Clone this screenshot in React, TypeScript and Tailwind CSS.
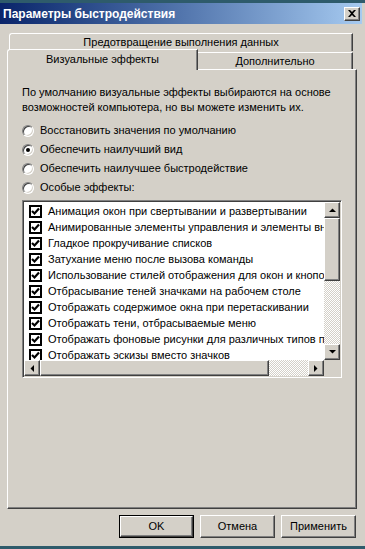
import React from 'react'

// Classic Windows "Performance Options" dialog

const raised =
	'border border-t-white border-l-white border-r-[#404040] border-b-[#404040] shadow-[inset_-1px_-1px_0_#808080]'

function Arrow({ dir }: { dir: 'up' | 'down' | 'left' | 'right' }) {
	const pts = {
		up: '0,4 7,4 3.5,0.5',
		down: '0,0 7,0 3.5,3.5',
		left: '4,0 4,7 0.5,3.5',
		right: '0,0 0,7 3.5,3.5',
	}[dir]
	const vertical = dir === 'up' || dir === 'down'
	return (
		<svg width={vertical ? 7 : 4} height={vertical ? 4 : 7} viewBox={vertical ? '0 0 7 4' : '0 0 4 7'}>
			<polygon points={pts} fill="#000" />
		</svg>
	)
}

function ScrollButton({ dir }: { dir: 'up' | 'down' | 'left' | 'right' }) {
	return (
		<div className={`w-[16px] h-[16px] shrink-0 bg-[#d4d0c8] flex items-center justify-center ${raised}`}>
			<Arrow dir={dir} />
		</div>
	)
}

function Radio({ checked, label }: { checked?: boolean; label: string }) {
	return (
		<div className="flex items-center h-[19px]">
			<div className="w-[12px] h-[12px] rounded-full border border-t-[#808080] border-l-[#808080] border-r-white border-b-white bg-white shadow-[inset_1px_1px_0_#404040,inset_-1px_-1px_0_#d4d0c8] flex items-center justify-center">
				{checked && <div className="w-[4px] h-[4px] rounded-full bg-black" />}
			</div>
			<span className="ml-[6px]">{label}</span>
		</div>
	)
}

function Check() {
	return (
		<div className="w-[13px] h-[13px] shrink-0 border-2 border-black bg-white flex items-center justify-center">
			<svg width="9" height="9" viewBox="0 0 9 9">
				<polyline points="1,4 3.5,6.5 8,1.5" fill="none" stroke="#000" strokeWidth="2.2" />
			</svg>
		</div>
	)
}

function Button({ label, isDefault }: { label: string; isDefault?: boolean }) {
	return (
		<div className={`w-[75px] h-[23px] ${isDefault ? 'border border-black' : ''}`}>
			<div className={`w-full h-full bg-[#d4d0c8] flex items-center justify-center ${raised}`}>{label}</div>
		</div>
	)
}

export default function App() {
	return (
		<div className="w-[365px] h-[549px] bg-[#2e5b6b] flex flex-col font-['Liberation_Sans',Arial,sans-serif] text-[11px] text-black leading-none">
			<div className="h-[3px] shrink-0" />
			<div className="flex-1 flex flex-col bg-[#d4d0c8] mb-[3px]">
				{/* Title bar */}
				<div className="h-[21px] shrink-0 mr-[3px] bg-linear-to-r from-[#0a246a] to-[#a6caf0] flex items-center justify-between pl-[3px] pr-[2px]">
					<span className="text-white font-bold text-[12px]">Параметры быстродействия</span>
					<div className={`w-[16px] h-[14px] bg-[#d4d0c8] flex items-center justify-center ${raised}`}>
						<svg width="8" height="7" viewBox="0 0 8 7">
							<path d="M0 0h2l2 2 2-2h2L5 3.5 8 7H6L4 5 2 7H0l3-3.5z" fill="#000" />
						</svg>
					</div>
				</div>

				<div className="pl-[7px] pt-[9px] flex flex-col">
					{/* Back tab row */}
					<div className="ml-[2px] w-[344px] h-[18px] rounded-tl-[3px] border-t border-l border-r border-t-white border-l-white border-r-[#404040] shadow-[inset_-1px_0_0_#808080] flex items-center justify-center pb-[1px]">
						Предотвращение выполнения данных
					</div>
					{/* Front tab row */}
					<div className="-mt-[2px] h-[20px] flex items-start relative">
						<div className="relative z-10 w-[191px] h-[21px] bg-[#d4d0c8] rounded-tl-[3px] border-t border-l border-r border-t-white border-l-white border-r-[#404040] shadow-[inset_-1px_0_0_#808080] flex items-center justify-center pb-[2px]">
							Визуальные эффекты
						</div>
						<div className="mt-[3px] w-[155px] h-[17px] border-t border-r border-t-white border-r-[#404040] shadow-[inset_-1px_0_0_#808080] flex items-center justify-center">
							Дополнительно
						</div>
					</div>

					{/* Panel */}
					<div className={`w-[350px] h-[440px] flex flex-col pl-[14px] ${raised}`}>
						<div className="pt-[15px] leading-[15px]">
							<div>По умолчанию визуальные эффекты выбираются на основе</div>
							<div>возможностей компьютера, но вы можете изменить их.</div>
						</div>
						<div className="mt-[6px] flex flex-col">
							<Radio label="Восстановить значения по умолчанию" />
							<Radio checked label="Обеспечить наилучший вид" />
							<Radio label="Обеспечить наилучшее быстродействие" />
							<Radio label="Особые эффекты:" />
						</div>

						{/* List box */}
						<div className="mt-[3px] w-[320px] h-[178px] border border-t-[#808080] border-l-[#808080] border-r-white border-b-white shadow-[inset_1px_1px_0_#404040,inset_-1px_-1px_0_#d4d0c8] p-[1px] flex flex-col">
							<div className="flex flex-1 min-h-0">
								<div className="flex-1 bg-white overflow-hidden pt-[1px] pl-[5px]">
									{items.map((t) => (
										<div key={t} className="h-[16px] flex items-center whitespace-nowrap">
											<Check />
											<span className="ml-[6px]">{t}</span>
										</div>
									))}
								</div>
								<div className="w-[16px] flex flex-col">
									<ScrollButton dir="up" />
									<div className={`h-[63px] bg-[#d4d0c8] ${raised}`} />
									<div className="flex-1 bg-[image:repeating-conic-gradient(#ffffff_0_25%,#d4d0c8_0_50%)] bg-[length:2px_2px]" />
									<ScrollButton dir="down" />
								</div>
							</div>
							<div className="h-[16px] flex">
								<ScrollButton dir="left" />
								<div className={`w-[229px] bg-[#d4d0c8] ${raised}`} />
								<div className="flex-1 bg-[image:repeating-conic-gradient(#ffffff_0_25%,#d4d0c8_0_50%)] bg-[length:2px_2px]" />
								<ScrollButton dir="right" />
								<div className="w-[16px] bg-[#d4d0c8]" />
							</div>
						</div>
					</div>

					{/* Buttons */}
					<div className="mt-[6px] w-[350px] flex justify-end gap-[6px] pr-[1px]">
						<Button label="OK" isDefault />
						<Button label="Отмена" />
						<Button label="Применить" />
					</div>
				</div>
			</div>
		</div>
	)
}

const items = [
	'Анимация окон при свертывании и развертывании',
	'Анимированные элементы управления и элементы внутри окна',
	'Гладкое прокручивание списков',
	'Затухание меню после вызова команды',
	'Использование стилей отображения для окон и кнопок',
	'Отбрасывание теней значками на рабочем столе',
	'Отображать содержимое окна при перетаскивании',
	'Отображать тени, отбрасываемые меню',
	'Отображать фоновые рисунки для различных типов папок',
	'Отображать эскизы вместо значков',
]
